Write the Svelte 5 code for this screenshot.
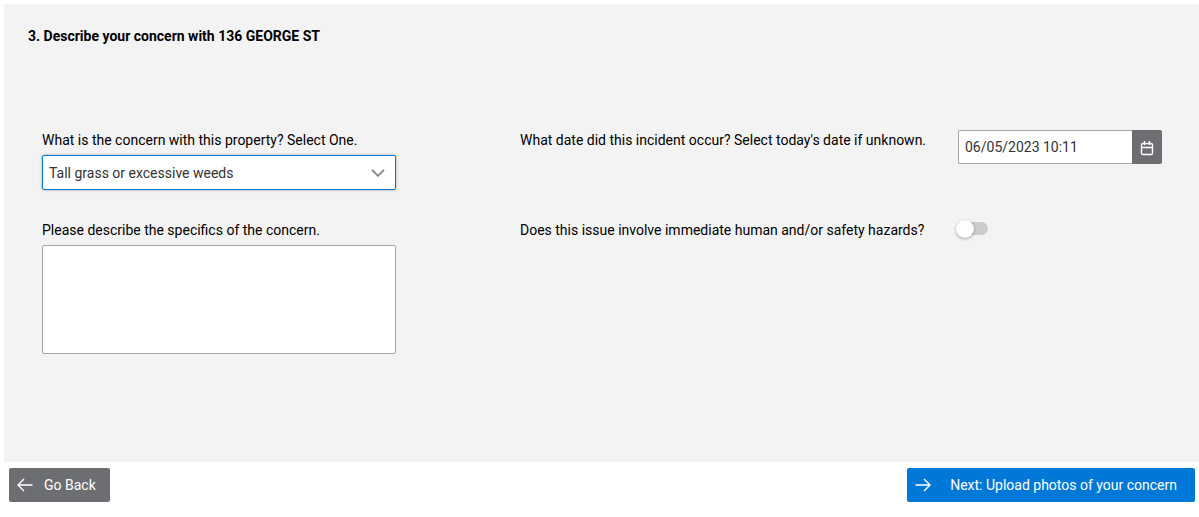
<script>
  let concern = $state('Tall grass or excessive weeds');
  let incident = $state('06/05/2023 10:11');
  let details = $state('');
  let hazard = $state(false);
</script>

<form class="page" onsubmit={(e) => e.preventDefault()}>
  <section class="panel">
    <h1>3. Describe your concern with 136 GEORGE ST</h1>
    <div class="fields">
      <div class="stack">
        <label for="concern">What is the concern with this property? Select One.</label>
        <div class="picker">
          <select id="concern" bind:value={concern}>
            <option>Tall grass or excessive weeds</option>
          </select>
          <svg class="chevron" width="14" height="8" viewBox="0 0 14 8" aria-hidden="true">
            <path d="M1 .8l6 6 6-6" />
          </svg>
        </div>
      </div>
      <div class="inline">
        <label for="incident">What date did this incident occur? Select today's date if unknown.</label>
        <div class="date">
          <input id="incident" type="text" bind:value={incident} />
          <button type="button" aria-label="Open calendar">
            <svg width="14" height="16" viewBox="0 0 14 16" aria-hidden="true">
              <rect x="1.5" y="3.5" width="11" height="11" rx="1.5" />
              <path d="M1.5 7.5h11M4.5 1v4M9.5 1v4" />
            </svg>
          </button>
        </div>
      </div>
      <div class="stack">
        <label for="details">Please describe the specifics of the concern.</label>
        <textarea id="details" bind:value={details}></textarea>
      </div>
      <div class="inline">
        <label for="hazard">Does this issue involve immediate human and/or safety hazards?</label>
        <input id="hazard" class="switch" type="checkbox" role="switch" bind:checked={hazard} />
      </div>
    </div>
  </section>
  <footer>
    <button type="button" class="action back">
      <svg width="16" height="14" viewBox="0 0 16 14" aria-hidden="true">
        <path d="M15.5 7H1.5M7 1L1 7l6 6" />
      </svg>
      <span>Go Back</span>
    </button>
    <button type="submit" class="action next">
      <svg width="16" height="14" viewBox="0 0 16 14" aria-hidden="true">
        <path d="M.5 7h14M9 1l6 6-6 6" />
      </svg>
      <span>Next: Upload photos of your concern</span>
    </button>
  </footer>
</form>

<style>
  :global(body) {
    margin: 0;
    background: #fff;
  }
  .page,
  .page * {
    box-sizing: border-box;
  }
  .page {
    padding: 4px 0 0 4px;
    font-family: Roboto, sans-serif;
    font-size: 14px;
    line-height: 20px;
    color: #000;
  }
  .panel {
    padding: 22px 24px 108px;
    background: #f3f3f3;
  }
  h1 {
    margin: 0 0 84px;
    font-size: 14px;
    line-height: 20px;
    font-weight: 700;
  }
  .fields {
    display: grid;
    grid-template-columns: 354fr 642fr;
    column-gap: 124px;
    row-gap: 30px;
    padding: 0 13px 0 14px;
  }
  .stack {
    display: flex;
    flex-direction: column;
    gap: 5px;
  }
  .inline {
    display: flex;
    align-items: flex-start;
    gap: 20px;
  }
  .inline label {
    flex: 0 0 418px;
  }
  .picker {
    display: grid;
    align-items: center;
  }
  select,
  .chevron {
    grid-area: 1 / 1;
  }
  .chevron {
    justify-self: end;
    margin-right: 11px;
    fill: none;
    stroke: #808080;
    stroke-width: 1.7;
    pointer-events: none;
  }
  select,
  .date input,
  textarea {
    width: 100%;
    margin: 0;
    border: 1px solid #a6a6a6;
    border-radius: 2px;
    outline: 0;
    background: #fff;
    color: #333;
    font: 14px/20px Roboto, sans-serif;
  }
  select {
    height: 35px;
    padding: 0 28px 0 6px;
    border-color: #0078d7;
    box-shadow: 0 0 3px #a6a6a6;
    appearance: none;
  }
  textarea {
    display: block;
    height: 109px;
    padding: 6px;
    resize: none;
  }
  .date {
    display: flex;
    flex: 1;
    height: 34px;
  }
  .date input {
    flex: 1;
    min-width: 0;
    padding: 0 6px;
    border-right: 0;
    border-radius: 2px 0 0 2px;
  }
  .date button {
    display: grid;
    place-items: center;
    width: 30px;
    padding: 2px 0 0;
    border: 0;
    border-radius: 0 2px 2px 0;
    background: #6d6e71;
  }
  .date svg,
  .action svg {
    fill: none;
    stroke: #fff;
    stroke-width: 1.4;
  }
  .switch {
    display: flex;
    align-items: center;
    width: 28px;
    height: 13px;
    margin: 2px 0 0 2px;
    border-radius: 7px;
    background: #ccc;
    appearance: none;
  }
  .switch::before {
    content: '';
    width: 18px;
    height: 18px;
    flex: none;
    margin-left: -4px;
    border-radius: 50%;
    background: #fff;
    box-shadow: 0 1px 3px #00000059;
  }
  .switch:checked {
    justify-content: flex-end;
    background: #0078d7;
  }
  footer {
    display: flex;
    justify-content: space-between;
    padding: 6px 4px 12px 5px;
  }
  .action {
    display: flex;
    align-items: center;
    height: 34px;
    border: 0;
    border-radius: 2px;
    color: #fff;
    font: 14px/20px Roboto, sans-serif;
  }
  .back {
    gap: 11px;
    padding: 0 14px 0 8px;
    background: #6d6e71;
  }
  .next {
    gap: 19px;
    padding: 0 18px 0 8px;
    background: #0078d7;
  }
</style>
